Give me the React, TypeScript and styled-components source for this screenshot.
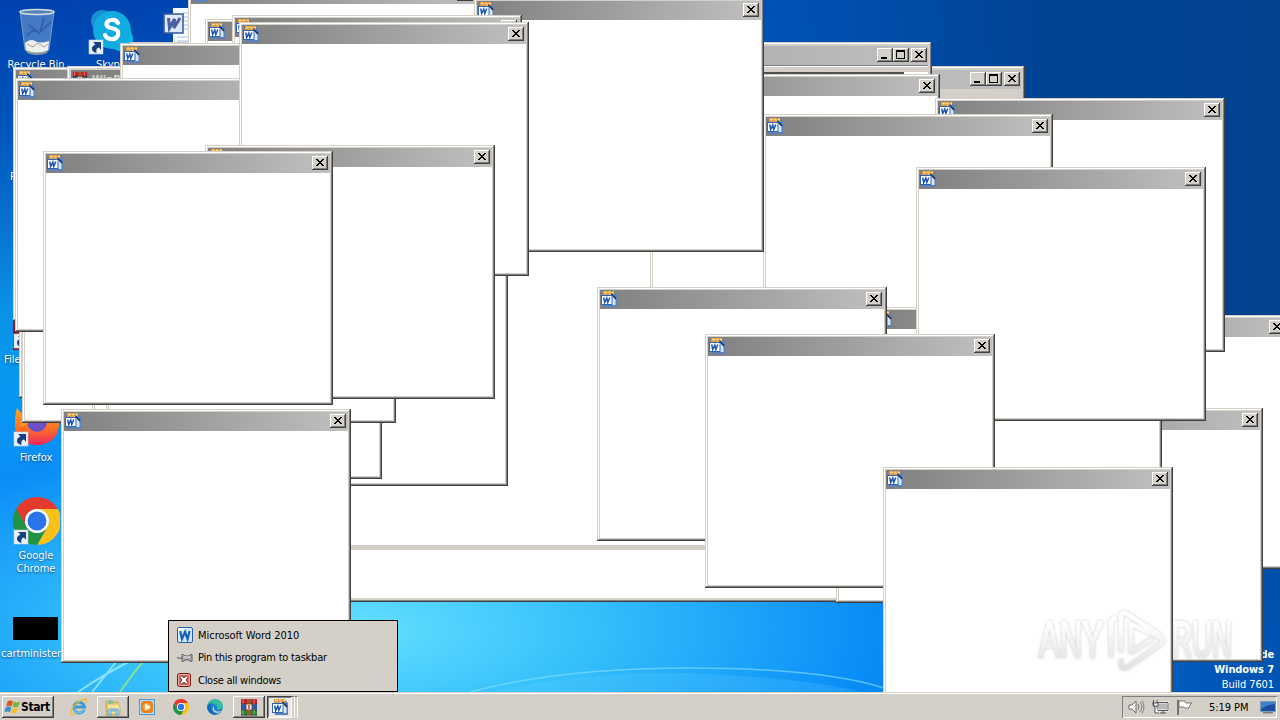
import React from "react";
import styled, { createGlobalStyle, css } from "styled-components";

const GlobalStyle = createGlobalStyle`
  * {
    box-sizing: border-box;
  }

  body {
    margin: 0;
    overflow: hidden;
    font-family: "DejaVu Sans Condensed", "DejaVu Sans", "Liberation Sans", sans-serif;
    font-size: 11px;
    color: #000;
  }

  svg {
    display: block;
    flex: none;
  }
`;

const raised = css`
  box-shadow:
    inset -1px -1px #404040,
    inset 1px 1px #fff,
    inset -2px -2px #808080;
`;

const Screen = styled.div`
  position: relative;
  display: flex;
  flex-direction: column;
  width: 1280px;
  height: 720px;
  overflow: hidden;
`;

const Desktop = styled.main`
  position: relative;
  flex: 1;
  overflow: hidden;
  background:
    radial-gradient(ellipse 860px 330px at 350px 630px, #66e0ff 0%, #35c0fb 28%, rgba(10, 142, 248, 1) 60%, rgba(4, 110, 222, 0) 100%),
    radial-gradient(ellipse 420px 360px at 1160px 720px, rgba(0, 94, 196, 0.9) 0%, rgba(0, 84, 180, 0.8) 45%, rgba(0, 72, 156, 0) 100%),
    linear-gradient(90deg, rgba(0, 84, 184, 0) 6%, rgba(0, 84, 184, 0.4) 25%, rgba(0, 82, 180, 0.9) 62%, #004394 82%, #00428e 100%),
    linear-gradient(180deg, #0042ae 0%, #0054bc 18%, #0670d0 32%, #0a92e6 45%, #04a2f0 62%, #00a6f8 100%);
`;

const Beams = styled.svg`
  position: absolute;
  left: 0;
  bottom: 0;
`;

const Shortcut = styled.div<{ $x: number; $y: number; $start?: boolean }>`
  position: absolute;
  left: ${({ $x }) => $x}px;
  top: ${({ $y }) => $y}px;
  display: flex;
  flex-direction: column;
  align-items: ${({ $start }) => ($start ? "flex-start" : "center")};
  width: 76px;
  color: #fff;
  line-height: 13px;
  text-align: center;
  text-shadow: 0 1px 2px rgba(0, 30, 80, 0.7);
`;

const ShortcutLabel = styled.span<{ $gap?: number }>`
  margin-top: ${({ $gap = 3 }) => $gap}px;
  white-space: pre;
`;

const Thumbnail = styled.div`
  width: 45px;
  height: 23px;
  margin-left: 12px;
  background: #000;
`;

const BuildInfo = styled.div`
  position: absolute;
  right: 6px;
  bottom: 0;
  display: flex;
  flex-direction: column;
  align-items: flex-end;
  gap: 1px;
  color: #fff;
  line-height: 14px;
  letter-spacing: -0.1px;
`;

const BuildLine = styled.span<{ $bold?: boolean }>`
  font-weight: ${({ $bold }) => ($bold ? 700 : 400)};
`;

const TitleBar = styled.header<{ $sizable?: boolean }>`
  display: flex;
  align-items: flex-start;
  flex: none;
  height: 19px;
  padding: 1px ${({ $sizable }) => ($sizable ? 1 : 2)}px 0 1px;
  background: linear-gradient(90deg, #808080, #c0c0c0);
  color: #d4d0c8;
  font-weight: 700;
`;

const Frame = styled.section<{
  $x: number;
  $y: number;
  $w: number;
  $h: number;
  $sizable?: boolean;
}>`
  position: absolute;
  left: ${({ $x }) => $x}px;
  top: ${({ $y }) => $y}px;
  width: ${({ $w }) => $w}px;
  height: ${({ $h }) => $h}px;
  display: flex;
  flex-direction: column;
  padding: ${({ $sizable }) => ($sizable ? 4 : 3)}px;
  background: #d4d0c8;
  box-shadow:
    inset -1px -1px #404040,
    inset 1px 1px #d4d0c8,
    inset -2px -2px #808080,
    inset 2px 2px #fff;
`;

const TitleText = styled.span`
  flex: 1;
  padding: 2px 0 0 4px;
  white-space: nowrap;
`;

const Caption = styled.button<{ $apart?: boolean }>`
  width: 16px;
  height: 14px;
  margin: 1px 0 0 ${({ $apart }) => ($apart ? 2 : 0)}px;
  padding: 0;
  border: 0;
  background: #d4d0c8;
  ${raised}
`;

const Client = styled.div`
  flex: 1;
  background: #fff;
`;

const WordClient = styled.div`
  flex: 1;
  display: flex;
  flex-direction: column;
  border-top: 1px solid #808080;
  background: #fff;
`;

const Ruler = styled.div`
  height: 6px;
  background: #d4d0c8;
  border-top: 1px solid #fff;
  flex: none;
`;

const Divider = styled.div`
  height: 2px;
  margin-right: 24px;
  background: #505050;
`;

const Page = styled.div`
  flex: 1;
`;

const Splitter = styled.div`
  height: 5px;
  background: #d4d0c8;
`;

const StatusPane = styled.div`
  height: 48px;
`;

const Watermark = styled.svg`
  position: absolute;
  left: 1034px;
  top: 602px;
`;

const JumpMenu = styled.ul`
  position: absolute;
  left: 168px;
  bottom: 0;
  width: 230px;
  height: 72px;
  margin: 0;
  padding: 3px 8px 0;
  border: 1px solid #000;
  background: #d4d0c8;
  list-style: none;
`;

const MenuItem = styled.li<{ $spacing: number }>`
  display: flex;
  align-items: center;
  gap: 5px;
  height: 22.5px;
  letter-spacing: ${({ $spacing }) => $spacing}px;
  white-space: nowrap;
`;

const Taskbar = styled.footer`
  display: flex;
  align-items: flex-start;
  height: 28px;
  flex: none;
  padding: 4px 3px 0 2px;
  background: #d4d0c8;
  box-shadow: inset 0 1px #d4d0c8, inset 0 2px #fff;
`;

const StartButton = styled.button`
  display: flex;
  align-items: center;
  width: 52px;
  height: 22px;
  padding: 0 0 0 2px;
  margin-right: 9px;
  border: 0;
  background: #d4d0c8;
  font: 700 12px "DejaVu Sans Condensed", "DejaVu Sans", sans-serif;
  letter-spacing: -0.4px;
  ${raised}
`;

const Task = styled.button<{ $open?: boolean; $pressed?: boolean }>`
  display: flex;
  align-items: center;
  justify-content: center;
  width: ${({ $pressed }) => ($pressed ? 25 : 32)}px;
  height: 22px;
  margin-right: ${({ $pressed }) => ($pressed ? 0 : 2)}px;
  padding: 0;
  border: 0;
  background: ${({ $pressed }) => ($pressed ? "#eae8e4" : "none")};
  ${({ $open }) => $open && raised}
  ${({ $pressed }) =>
    $pressed &&
    css`
      box-shadow:
        inset 1px 1px #404040,
        inset -1px -1px #fff,
        inset 2px 2px #808080;
    `}
`;

const StackEdge = styled.span`
  width: 3px;
  height: 22px;
  border-right: 1px solid #fff;
  border-top: 1px solid #808080;
`;

const Tray = styled.div`
  display: flex;
  align-items: center;
  width: 155px;
  height: 22px;
  margin-left: auto;
  padding: 0 1px 0 6px;
  gap: 7px;
  box-shadow: inset 1px 1px #808080, inset -1px -1px #fff;
`;

const Clock = styled.time`
  width: 45px;
  margin-left: 9px;
  letter-spacing: -0.05px;
  white-space: nowrap;
`;

const DocIcon = () => (
  <svg width="16" height="16" viewBox="0 0 16 16">
    <path d="M2 1h11l3 3v12H3z" fill="#5a82b8" />
    <path d="M2 0h11v4H2z" fill="#dc9a48" />
    <path d="M3 1.500h3M7 1.500h2.500M11 1.500h2" stroke="#ffd97c" strokeWidth="1.600" />
    <path d="M8 3.500h3l3.500 4V14H8z" fill="#d3e5fa" />
    <path d="M10.500 3l4.500 5" stroke="#172744" strokeWidth="1.500" />
    <rect x=".5" y="4.500" width="10.500" height="9" fill="#fff" stroke="#2f64bd" />
    <path d="M2.700 6.500l1 5L5.800 7l1 4.500 2-5" fill="none" stroke="#1c54b4" strokeWidth="1.500" />
  </svg>
);

const WordIcon = () => (
  <svg width="16" height="16" viewBox="0 0 16 16">
    <rect x=".5" y=".5" width="15" height="15" rx="1.5" fill="#d3e7fa" stroke="#285f9f" />
    <path d="M1 6V1h8z" fill="#fff" />
    <path d="M3.200 4l1.800 8L8 5l2.600 7 2-8" fill="none" stroke="#1761b4" strokeWidth="2.200" />
  </svg>
);

const PinIcon = () => (
  <svg width="16" height="16" viewBox="0 0 16 16">
    <path d="M0 8h5" stroke="#777" strokeWidth="1.4" />
    <path d="M5 4.5h1.5L8 6h4l1.5-1.5H15v7h-1.5L12 10H8l-1.500 1.500H5z" fill="#aaa" stroke="#606060" />
    <path d="M7 7h6" stroke="#eee" />
  </svg>
);

const CloseAllIcon = () => (
  <svg width="16" height="14" viewBox="0 0 16 14">
    <rect x=".5" y=".5" width="13" height="13" rx="2" fill="#d8675f" stroke="#6d1813" />
    <rect x="1.500" y="1.500" width="11" height="11" rx="1" fill="none" stroke="#f0b0a5" />
    <path d="M4.200 4l5.600 6M9.800 4l-5.600 6" stroke="#4f2725" strokeWidth="3.600" />
    <path d="M4.200 4l5.600 6M9.800 4l-5.600 6" stroke="#fff" strokeWidth="2" />
  </svg>
);

const RarIcon = ({ size = 18 }: { size?: number }) => (
  <svg width={size} height={size} viewBox="0 0 18 18">
    <path d="M1 1h16v5H1z" fill="#c4212b" />
    <path d="M1 6.500h16v5H1z" fill="#2756b0" />
    <path d="M1 12h16v5H1z" fill="#27883b" />
    <path d="M1 6h16M1 12h16M1 17h16" stroke="#302020" />
    <path d="M7 1h4v16H7z" fill="#9a5a2c" />
    <rect x="6" y="6" width="6" height="6" fill="#eee" stroke="#7a5020" />
    <path d="M9 7v4" stroke="#c33" strokeWidth="1.500" />
    <path d="M3 1v5M14 1v5" stroke="#ef7777" />
    <path d="M3 12v5M14 12v5" stroke="#67c56d" />
  </svg>
);

const ChromeIcon = ({ size }: { size: number }) => (
  <svg width={size} height={size} viewBox="0 0 48 48">
    <path d="M3.200 12A24 24 0 0 1 44.800 12H24A12 12 0 0 0 13.600 30z" fill="#e33b2e" />
    <path d="M44.800 12A24 24 0 0 1 24 48L34.400 30A12 12 0 0 0 24 12z" fill="#fbc116" />
    <path d="M24 48A24 24 0 0 1 3.200 12L13.600 30A12 12 0 0 0 34.400 30z" fill="#229342" />
    <circle cx="24" cy="24" r="12" fill="#fff" />
    <circle cx="24" cy="24" r="9.500" fill="#2a75ea" />
  </svg>
);

const EdgeIcon = () => (
  <svg width="16" height="16" viewBox="0 0 16 16">
    <circle cx="8" cy="8" r="7.800" fill="#1686cf" />
    <path d="M.3 7C1 2.500 4.500.2 8 .2c5 0 8 3.300 7.800 6.800-.2 2.500-2 3.500-4.300 3.500-1.500 0-2-.7-1.400-1.500C11 7 9 5 6.500 5 4 5 1.500 5.800.3 7z" fill="#36bd9c" />
    <path d="M.2 8C.5 5 3.500 4 6 4.400 4 6 3 9 5 12c1 1.800 3 3 5 3.200C5 17 .2 13 .2 8z" fill="#1268bd" />
    <path d="M7.500 7c-1.500 2-.5 5 3 5.500 1.500.2 3-.2 4.300-1-2 3-6 3-8 1-1.800-2-1.500-4.500.7-5.500z" fill="#d4d0c8" />
  </svg>
);

const IeIcon = () => (
  <svg width="18" height="18" viewBox="0 0 18 18">
    <path d="M14.200 11.800A5.400 5.400 0 1 1 14.600 9H5" fill="none" stroke="#3a9bd8" strokeWidth="2.800" />
    <path d="M13.500 12A5 5 0 0 1 4 11" fill="none" stroke="#8fd2f2" />
    <path d="M1 16c-2-4 7-14 14-15 2 0 2 2 .7 4M1 16c1.200 1.500 3.500 0 5-1" fill="none" stroke="#e9b936" strokeWidth="1.300" />
  </svg>
);

const FolderIcon = () => (
  <svg width="18" height="17" viewBox="0 0 18 17">
    <path d="M2 2h6l1 1h5v13H2z" fill="#e9cd75" stroke="#c6a650" />
    <path d="M4 1h5v4H4z" fill="#8cc1a4" />
    <path d="M3 5h12l2 10H4z" fill="#f5e39b" stroke="#cba74f" strokeWidth=".6" />
    <path d="M4 16v-4q0-2 2-2h7q2 0 2 2v4h-3v-4H7v4z" fill="#9ed3ed" stroke="#5592b2" strokeWidth=".7" />
  </svg>
);

const MediaIcon = () => (
  <svg width="16" height="16" viewBox="0 0 16 16">
    <rect x=".5" y=".5" width="15" height="15" fill="#b3dcf5" stroke="#4f9acb" />
    <rect x="2" y="2" width="12" height="12" rx="3" fill="#f08418" />
    <circle cx="8" cy="8" r="4.700" fill="#f7a33c" stroke="#d76b0a" strokeWidth=".7" />
    <path d="M6.200 4.500v7L11.500 8z" fill="#fff" />
  </svg>
);

const FlagLogo = () => (
  <svg width="17" height="17" viewBox="0 0 16 16">
    <path d="M3.500 2.200q2.500-1.800 5 0L7.200 7Q4.500 5.500 2 7z" fill="#e65324" />
    <path d="M9.200 2.500q2.800 1.600 5.800-.2L13.600 7q-3 1.500-5.500.3z" fill="#73b638" />
    <path d="M1.700 8q2.500-1.700 5.200-.1l-1.400 4.600q-2.500-1.500-5.200 0z" fill="#398ed4" />
    <path d="M7.800 8.200q2.500 1.400 5.500-.2l-1.400 4.800q-3 1.700-5.400.2z" fill="#f4bf28" />
  </svg>
);

const LinkArrow = ({ x, y }: { x: number; y: number }) => (
  <g transform={`translate(${x} ${y})`}>
    <rect width="14" height="14" fill="#e9f1f8" stroke="#b9cfdf" strokeWidth=".6" />
    <path d="M4 2h8v8l-2-2.500q-3.500.5-2.500 5.500Q2.500 12 3 7.500 4 5.500 6.500 4.500z" fill="#173f81" />
  </g>
);

const RecycleBinIcon = () => (
  <svg width="40" height="48" viewBox="-3 0 40 48">
    <path d="M1 3l5 39q12 6 24 0l5-39z" fill="#a9c7df" fillOpacity=".4" stroke="#abc5da" strokeOpacity=".6" />
    <path d="M6 35q5-5 10-2t14 0l-1 10q-11 5-22 0z" fill="#eef1f1" />
    <path d="M8 36l6 3 5-4 6 4 4-3" stroke="#b1a28f" fill="none" />
    <ellipse cx="18" cy="4" rx="17" ry="2.500" fill="#5584b6" stroke="#cfdae2" strokeWidth="1.500" />
    <path d="M10 17l10 8 12-11M25 10l-4 14M8 28q4-6 9-5" stroke="#2458a8" strokeWidth="2" strokeOpacity=".7" fill="none" />
    <path d="M7 42q11 5 22 0l-1 3q-10 4-20 0z" fill="#8c98a2" />
  </svg>
);

const SkypeIcon = () => (
  <svg width="46" height="48" viewBox="0 0 46 48">
    <circle cx="14" cy="13" r="11" fill="#168fd1" />
    <circle cx="33" cy="31" r="12" fill="#00bdea" />
    <circle cx="24" cy="22" r="19" fill="#10acdf" />
    <path d="M30 15q-2-4-7-3c-6 1-6 7 0 8s8 3 7 7c-2 6-11 5-13 0" stroke="#fff" strokeWidth="4.200" strokeLinecap="round" fill="none" />
    <LinkArrow x={1} y={32} />
  </svg>
);

const FirefoxIcon = () => (
  <svg width="48" height="48" viewBox="0 0 48 48">
    <defs>
      <linearGradient id="fox" x1="0" y1="0" x2="0" y2="1">
        <stop stopColor="#ffb02a" />
        <stop offset=".6" stopColor="#ff7120" />
        <stop offset="1" stopColor="#f02861" />
      </linearGradient>
    </defs>
    <path d="M5 9l4 5Q13 6 25 4c14 0 22 9 22 21 0 13-10 21-22 21S2 38 3 24q0-9 2-15z" fill="url(#fox)" />
    <circle cx="25" cy="23" r="10" fill="#6a4fc8" />
    <path d="M10 13l12 4q-6 3-6 8l-8 3z" fill="#ff9428" />
    <LinkArrow x={2} y={33} />
  </svg>
);

const WordDocIcon = () => (
  <svg width="38" height="38" viewBox="0 0 38 38">
    <path d="M10 0h28v38H10z" fill="#f8fbff" />
    <path d="M20 5h18M20 9h18M20 13h18M20 17h18M20 21h18M14 29h24M14 33h24" stroke="#a8bee5" />
    <rect x="1" y="6" width="19" height="19" fill="#dfe8f8" stroke="#3a5f9f" strokeWidth="1.600" />
    <path d="M5.500 10l1 10 5-9-.5 9 6-10" fill="none" stroke="#4a5fa0" strokeWidth="3" />
  </svg>
);

const SpeakerIcon = () => (
  <svg width="17" height="16" viewBox="0 0 17 16">
    <path d="M1 6h3l4-4v12l-4-4H1z" fill="#fff" stroke="#686868" />
    <path d="M10 5q2 3 0 6M12 3q4 5 0 10M14 1.500q4 6.500 0 13" fill="none" stroke="#808080" />
  </svg>
);

const NetworkIcon = () => (
  <svg width="17" height="16" viewBox="0 0 17 16">
    <path d="M5 3.500h11v8H5z" fill="#b8b8b8" stroke="#fff" strokeWidth="2" />
    <path d="M5 3.500h11v8H5zM8 14h6M11 12v2" fill="none" stroke="#555" />
    <path d="M1 3v3q0 2 2 2v6h4M1.500 1v3M5 1v3M1 4h5v3H2z" fill="#fff" stroke="#555" />
  </svg>
);

const AlertFlagIcon = () => (
  <svg width="17" height="16" viewBox="0 0 17 16">
    <path d="M2 1v15" stroke="#555" strokeWidth="1.500" />
    <path d="M3 2h6l1 2h6q-3 2-3 5H9L8 8H3z" fill="#fff" stroke="#777" />
  </svg>
);

const ShowDesktopIcon = () => (
  <svg width="16" height="14" viewBox="0 0 16 14">
    <rect x=".5" y="1.500" width="15" height="10" fill="#1a4f9f" stroke="#7d9cba" />
    <path d="M1 9Q8 4 15 4V2H1z" fill="#3f82cc" />
    <path d="M3 12.800h10" stroke="#4b555f" />
  </svg>
);

type CaptionKind = "min" | "max" | "close";

const glyphs: Record<CaptionKind, React.ReactNode> = {
  min: <path d="M4 10h6" stroke="#000" strokeWidth="2" />,
  max: <path d="M3.500 2.500h8v8h-8zM3 3.500h9" fill="none" stroke="#000" />,
  close: <path d="M4 3h2v1h1v1h2V4h1V3h2v1h-1v1h-1v1H9v1h1v1h1v1h1v1h-2V9H9V8H7v1H6v1H4V9h1V8h1V7h1V6H6V5H5V4H4z" />,
};

const CaptionButton = ({ kind }: { kind: CaptionKind }) => (
  <Caption $apart={kind === "close"} aria-label={kind}>
    <svg width="16" height="14" shapeRendering="crispEdges">
      {glyphs[kind]}
    </svg>
  </Caption>
);

type DialogProps = { x: number; y: number };

const Dialog = ({ x, y }: DialogProps) => (
  <Frame $x={x} $y={y} $w={290} $h={254}>
    <TitleBar>
      <DocIcon />
      <TitleText />
      <CaptionButton kind="close" />
    </TitleBar>
    <Client />
  </Frame>
);

// Bottom of the stack first
const DIALOGS: DialogProps[] = [
  { x: 1000, y: 315 },
  { x: 973, y: 408 },
  { x: 836, y: 349 },
  { x: 650, y: 74 },
  { x: 935, y: 98 },
  { x: 763, y: 114 },
  { x: 872, y: 307 },
  { x: 188, y: -18 },
  { x: 205, y: 19 },
  { x: 474, y: -2 },
  { x: 232, y: 15 },
  { x: 218, y: 232 },
  { x: 19, y: 144 },
  { x: 120, y: 43 },
  { x: 22, y: 169 },
  { x: 92, y: 225 },
  { x: 106, y: 169 },
  { x: 15, y: 78 },
  { x: 239, y: 22 },
  { x: 205, y: 145 },
  { x: 43, y: 151 },
  { x: 61, y: 409 },
  { x: 916, y: 167 },
  { x: 597, y: 287 },
  { x: 705, y: 334 },
  { x: 883, y: 467 },
];

const MENU = [
  { label: "Microsoft Word 2010", icon: <WordIcon />, spacing: -0.03 },
  { label: "Pin this program to taskbar", icon: <PinIcon />, spacing: -0.22 },
  { label: "Close all windows", icon: <CloseAllIcon />, spacing: -0.27 },
];

const App = () => {
  return (
    <>
      <GlobalStyle />
      <Screen>
        <Desktop>
          <Beams width="1280" height="100" viewBox="0 592 1280 100">
            <path d="M78 692Q104 674 140 656M92 692L116 662" stroke="#bdf4ff" strokeOpacity=".65" strokeWidth="2" fill="none" />
            <path d="M120 692Q132 674 148 656" stroke="#9de878" strokeOpacity=".8" strokeWidth="2" fill="none" />
            <path d="M470 692Q560 668 690 668T884 688" stroke="#8ae2ff" strokeOpacity=".6" strokeWidth="1.500" fill="none" />
            <path d="M490 692Q600 668 710 674T860 692z" fill="#6ad5ff" fillOpacity=".2" />
          </Beams>

          <Shortcut $x={-2} $y={8}>
            <RecycleBinIcon />
            <ShortcutLabel $gap={2}>Recycle Bin</ShortcutLabel>
          </Shortcut>
          <Shortcut $x={73} $y={8}>
            <SkypeIcon />
            <ShortcutLabel $gap={2}>Skype</ShortcutLabel>
          </Shortcut>
          <Shortcut $x={144} $y={8}>
            <WordDocIcon />
          </Shortcut>
          <Shortcut $x={10} $y={170} $start>
            <ShortcutLabel $gap={0}>PDF</ShortcutLabel>
          </Shortcut>
          <Shortcut $x={4} $y={306} $start>
            <svg width="56" height="44" viewBox="-9 0 56 44">
              <path d="M0 0h44v44H0z" fill="#8f1730" />
              <LinkArrow x={1} y={28} />
            </svg>
            <ShortcutLabel>FileZilla Client</ShortcutLabel>
          </Shortcut>
          <Shortcut $x={-2} $y={399}>
            <FirefoxIcon />
            <ShortcutLabel $gap={4}>Firefox</ShortcutLabel>
          </Shortcut>
          <Shortcut $x={-2} $y={497}>
            <svg width="48" height="48" viewBox="-1 0 48 48">
              <ChromeIcon size={48} />
              <LinkArrow x={1} y={33} />
            </svg>
            <ShortcutLabel $gap={4}>{"Google\nChrome"}</ShortcutLabel>
          </Shortcut>
          <Shortcut $x={1} $y={617} $start>
            <Thumbnail />
            <ShortcutLabel $gap={7}>cartminister.jpg</ShortcutLabel>
          </Shortcut>

          <BuildInfo>
            <BuildLine $bold>Safe Mode</BuildLine>
            <BuildLine $bold>Windows 7</BuildLine>
            <BuildLine>Build 7601</BuildLine>
          </BuildInfo>

          <Dialog x={13} y={67} />

          <Frame $x={67} $y={66} $w={958} $h={420} $sizable>
            <TitleBar $sizable>
              <RarIcon size={16} />
              <TitleText>WinRAR</TitleText>
              <CaptionButton kind="min" />
              <CaptionButton kind="max" />
              <CaptionButton kind="close" />
            </TitleBar>
          </Frame>

          <Frame $x={130} $y={42} $w={802} $h={560} $sizable>
            <TitleBar $sizable>
              <DocIcon />
              <TitleText />
              <CaptionButton kind="min" />
              <CaptionButton kind="max" />
              <CaptionButton kind="close" />
            </TitleBar>
            <WordClient>
              <Ruler />
              <Divider />
              <Page />
              <Splitter />
              <StatusPane />
            </WordClient>
          </Frame>

          {DIALOGS.map((dialog) => (
            <Dialog key={`${dialog.x}-${dialog.y}`} {...dialog} />
          ))}

          <Watermark width="204" height="76" viewBox="1034 602 204 76">
            <defs>
              <linearGradient id="fade" x1="0" y1="612" x2="0" y2="668" gradientUnits="userSpaceOnUse">
                <stop offset=".2" stopColor="#fff" />
                <stop offset="1" stopColor="#dcdcdc" />
              </linearGradient>
              <filter id="soft" x="-10%" y="-20%" width="120%" height="140%">
                <feDropShadow dx="0" dy="0" stdDeviation="1.600" floodColor="#777" floodOpacity=".5" />
              </filter>
            </defs>
            <g
              filter="url(#soft)"
              opacity=".85"
              fontFamily="Liberation Sans, sans-serif"
              fontSize="50"
              fill="url(#fade)"
              stroke="url(#fade)"
            >
              <text x="1039" y="657" textLength="64" lengthAdjust="spacingAndGlyphs" strokeWidth="1.800">ANY</text>
              <text x="1172" y="657" textLength="60" lengthAdjust="spacingAndGlyphs" strokeWidth="1.800">RUN</text>
              <path
                d="M1111 657v-36l5-4M1121 652v-36q1-5 6-2l34 22M1121 659v7q2 4 7 1l33-23q3-3 0-6l-30-14v28l22-13"
                fill="none"
                strokeWidth="4.500"
                strokeLinejoin="round"
              />
            </g>
          </Watermark>

          <JumpMenu>
            {MENU.map(({ label, icon, spacing }) => (
              <MenuItem key={label} $spacing={spacing}>
                {icon}
                <span>{label}</span>
              </MenuItem>
            ))}
          </JumpMenu>
        </Desktop>

        <Taskbar>
          <StartButton>
            <FlagLogo />
            Start
          </StartButton>
          <Task aria-label="Internet Explorer">
            <IeIcon />
          </Task>
          <Task $open aria-label="Explorer">
            <FolderIcon />
          </Task>
          <Task aria-label="Media Player">
            <MediaIcon />
          </Task>
          <Task aria-label="Chrome">
            <ChromeIcon size={16} />
          </Task>
          <Task aria-label="Edge">
            <EdgeIcon />
          </Task>
          <Task $open aria-label="WinRAR">
            <RarIcon />
          </Task>
          <Task $pressed aria-label="Word">
            <DocIcon />
          </Task>
          <StackEdge />
          <StackEdge />
          <Tray>
            <SpeakerIcon />
            <NetworkIcon />
            <AlertFlagIcon />
            <Clock>5:19 PM</Clock>
            <ShowDesktopIcon />
          </Tray>
        </Taskbar>
      </Screen>
    </>
  );
};

export default App;
